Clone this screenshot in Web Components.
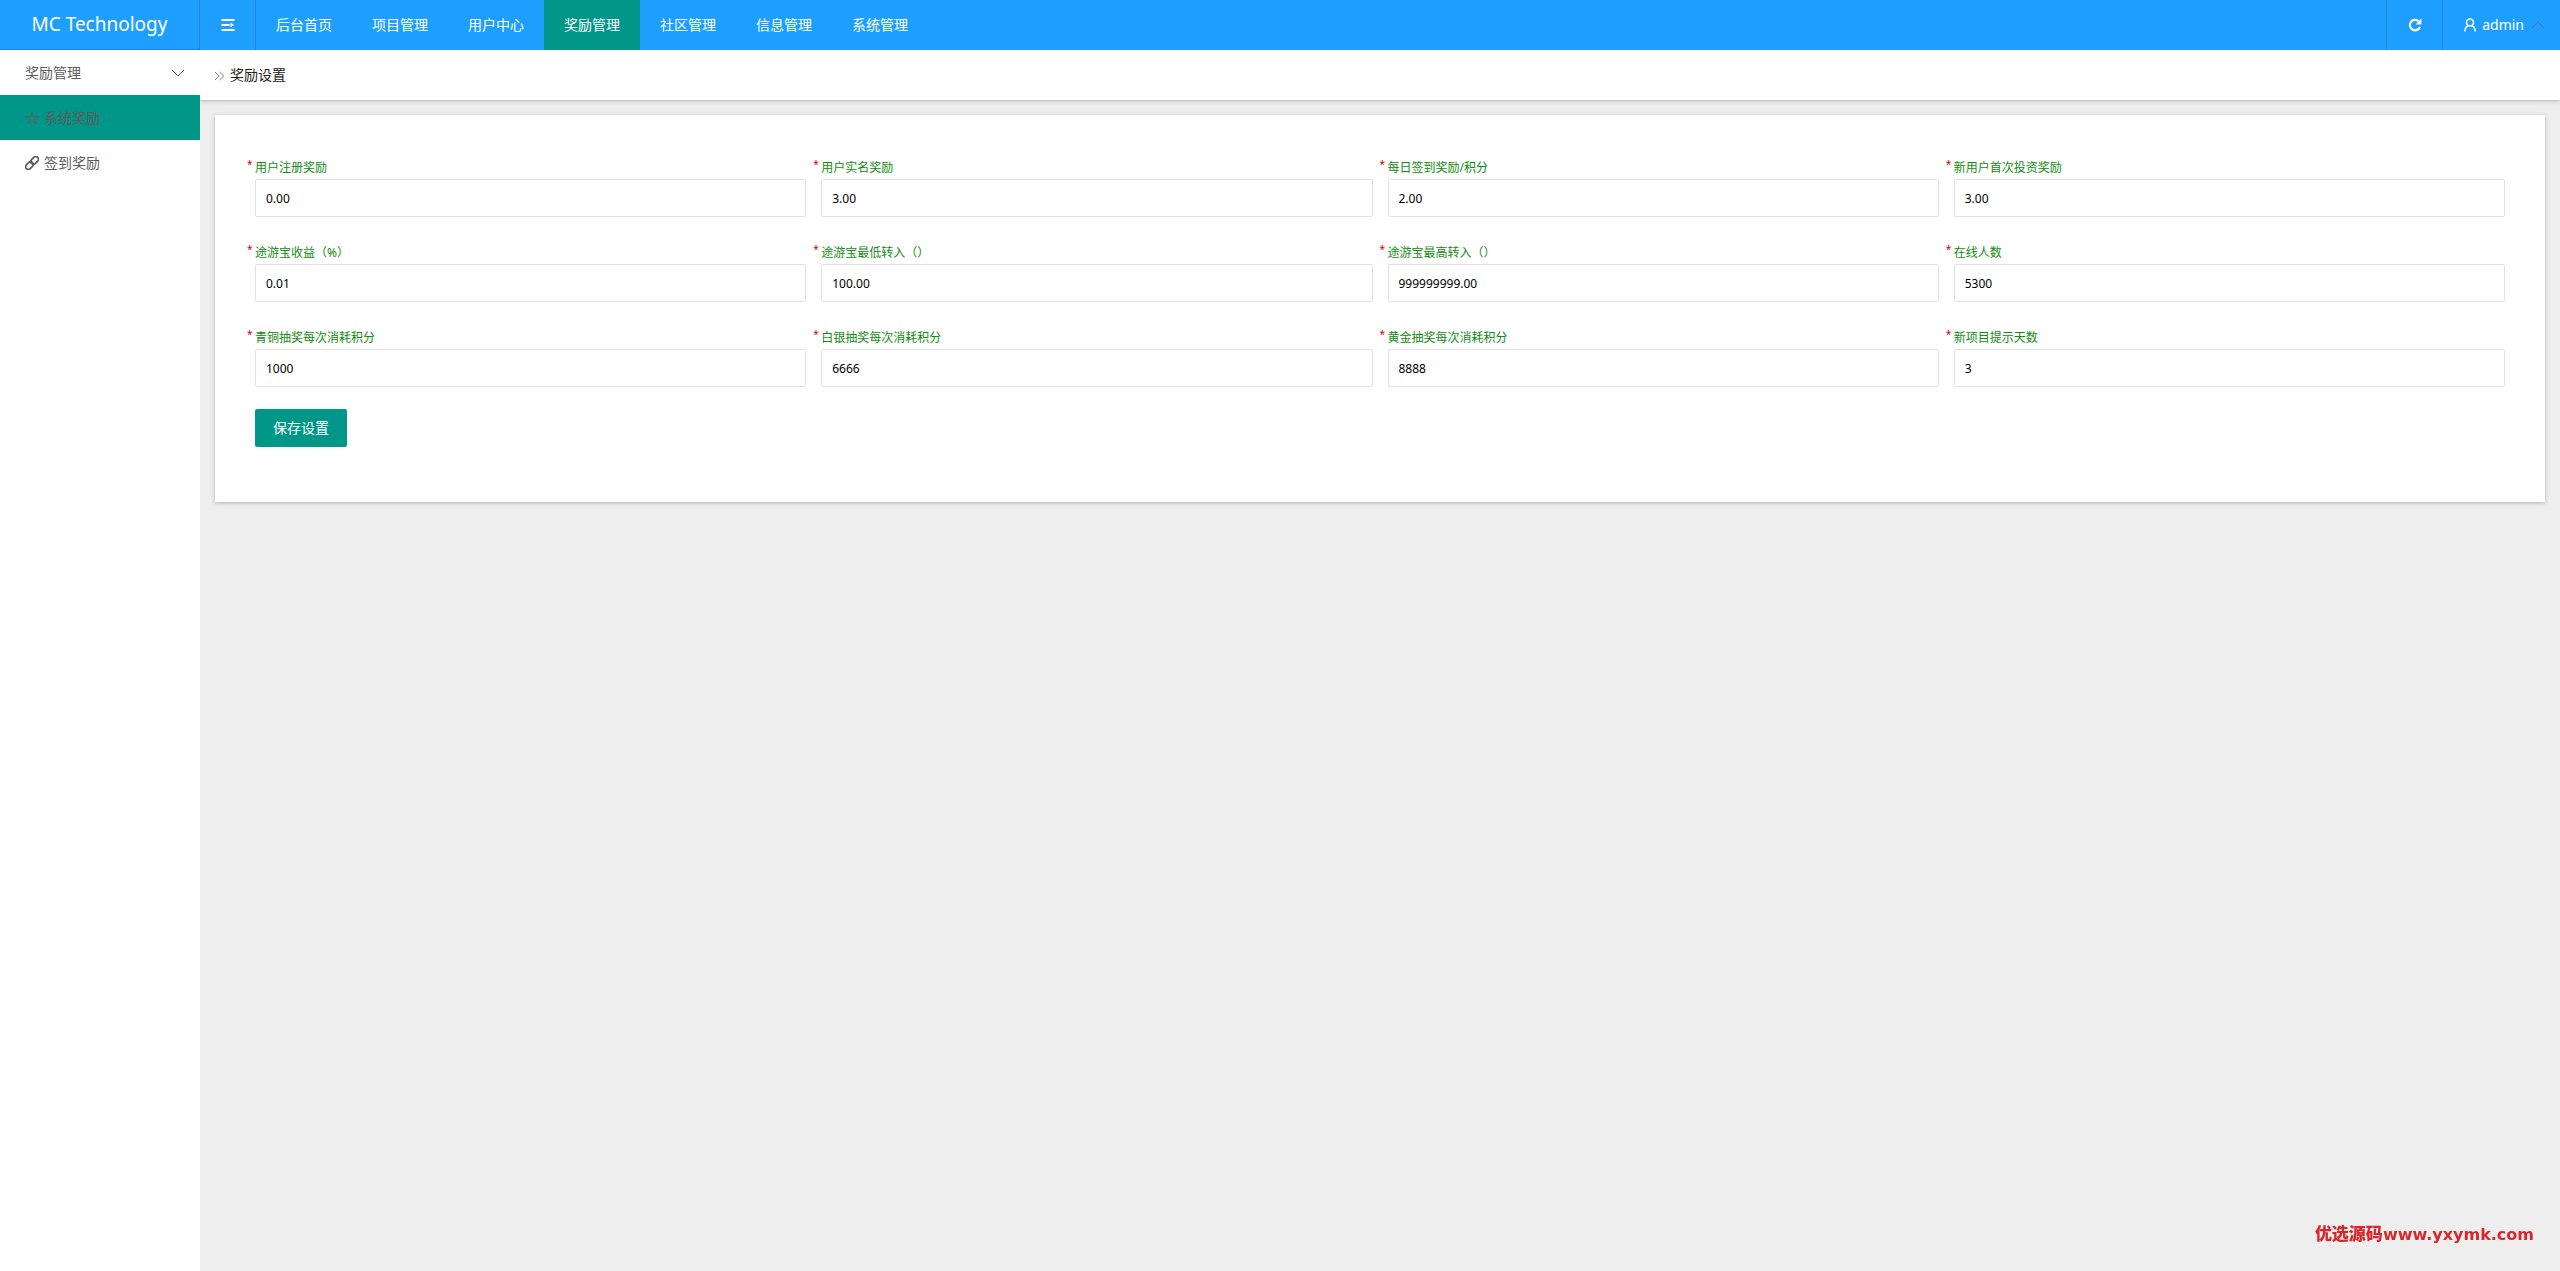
<!DOCTYPE html>
<html lang="zh-CN">
<head>
<meta charset="utf-8">
<meta name="viewport" content="width=device-width, initial-scale=1">
<title>奖励设置</title>
<style>
  body {
    margin: 0;
    background: #eeeeee;
    color: #333;
    font: 14px/24px "Noto Sans", "Noto Sans CJK SC", sans-serif;
  }
</style>
</head>
<body>

<admin-layout>
  <admin-header slot="header" brand="MC Technology" user="admin">
    <nav-item>后台首页</nav-item>
    <nav-item>项目管理</nav-item>
    <nav-item>用户中心</nav-item>
    <nav-item active>奖励管理</nav-item>
    <nav-item>社区管理</nav-item>
    <nav-item>信息管理</nav-item>
    <nav-item>系统管理</nav-item>
  </admin-header>

  <side-menu slot="side" heading="奖励管理">
    <side-item icon="star" active>系统奖励</side-item>
    <side-item icon="link">签到奖励</side-item>
  </side-menu>

  <page-title>奖励设置</page-title>

  <settings-card>
    <form-field label="用户注册奖励" value="0.00"></form-field>
    <form-field label="用户实名奖励" value="3.00"></form-field>
    <form-field label="每日签到奖励/积分" value="2.00"></form-field>
    <form-field label="新用户首次投资奖励" value="3.00"></form-field>
    <form-field label="途游宝收益（%）" value="0.01"></form-field>
    <form-field label="途游宝最低转入（）" value="100.00"></form-field>
    <form-field label="途游宝最高转入（）" value="999999999.00"></form-field>
    <form-field label="在线人数" value="5300"></form-field>
    <form-field label="青铜抽奖每次消耗积分" value="1000"></form-field>
    <form-field label="白银抽奖每次消耗积分" value="6666"></form-field>
    <form-field label="黄金抽奖每次消耗积分" value="8888"></form-field>
    <form-field label="新项目提示天数" value="3"></form-field>
    <save-button slot="actions">保存设置</save-button>
  </settings-card>

  <site-mark slot="mark"><b>优选源码</b>www.yxymk.com</site-mark>
</admin-layout>

<script>
const ICONS = {
  menu: `<path d="M.5 2h13M.5 7h8M.5 12h13" stroke-width="2"/><path d="M9.5 4.4 13 7 9.5 9.6z" fill="currentColor" stroke="none"/>`,
  refresh: `<path d="M12 8.8A5.2 5.2 0 1 1 10.6 3.2" stroke-width="2.2"/><path d="M13.4.6v5.8H7.6z" fill="currentColor" stroke="none"/>`,
  user: `<circle cx="7" cy="4.6" r="3.5" stroke-width="1.5"/><path d="M1.8 13.4c0-3 1.2-4.8 3.4-5.7M12.2 13.4c0-3-1.2-4.8-3.4-5.7" stroke-width="1.5"/>`,
  up: `<path d="M1 10 7 4l6 6"/>`,
  down: `<path d="m1 4 6 6 6-6"/>`,
  more: `<path d="m2 4 4.2 4L2 12M6.5 4l4.2 4-4.2 4"/>`,
  star: `<path d="m7 1.2 1.5 4.3h4.6L9.4 8.2l1.4 4.5L7 10l-3.8 2.7 1.4-4.5L.9 5.5h4.6z"/>`,
  link: `<g transform="rotate(-45 7 7)" stroke-width="1.7"><rect x="-1" y="4.3" width="8.6" height="5.4" rx="2.7"/><rect x="6.4" y="4.3" width="8.6" height="5.4" rx="2.7"/></g>`
};

function icon(name) {
  return `<svg class="icon-${name}" width="14" height="14" viewBox="0 0 14 14"
    fill="none" stroke="currentColor" aria-hidden="true">${ICONS[name]}</svg>`;
}

class AdminLayout extends HTMLElement {
  connectedCallback() {
    this.attachShadow({ mode: "open" }).innerHTML = /* html */`
      <style>
        :host {
          display: flex;
          flex-direction: column;
          min-height: 100vh;
        }
        .body { display: flex; flex: 1; }
        aside { flex: 0 0 200px; background: #fff; }
        main { flex: 1; min-width: 0; }
      </style>
      <slot name="header"></slot>
      <div class="body">
        <aside><slot name="side"></slot></aside>
        <main><slot></slot></main>
      </div>
      <slot name="mark"></slot>
    `;
  }
}

class AdminHeader extends HTMLElement {
  connectedCallback() {
    this.attachShadow({ mode: "open" }).innerHTML = /* html */`
      <style>
        :host {
          display: block;
          background: #1e9fff;
          color: #fff;
        }
        header { display: flex; height: 50px; }
        .brand {
          box-sizing: border-box;
          width: 200px;
          border-right: 1px solid #1a87d9;
          border-bottom: 1px solid #1a87d9;
          color: inherit;
          font-size: 19px;
          line-height: 48px;
          text-align: center;
          text-decoration: none;
        }
        nav { display: flex; flex: 1; }
        button {
          display: flex;
          align-items: center;
          justify-content: center;
          box-sizing: border-box;
          width: 56px;
          padding: 0;
          border: 0;
          background: none;
          color: inherit;
          font: inherit;
          cursor: pointer;
        }
        .toggle { border-right: 1px solid #1a87d9; }
        .reload, .account { border-left: 1px solid #1a87d9; }
        .account {
          gap: 5px;
          width: auto;
          padding: 0 15px 0 20px;
        }
        .icon-up { margin-left: 2px; color: #3a7ca8; }
      </style>
      <header>
        <a class="brand" href="#">${this.getAttribute("brand")}</a>
        <button class="toggle" type="button" aria-label="菜单">${icon("menu")}</button>
        <nav><slot></slot></nav>
        <button class="reload" type="button" aria-label="刷新">${icon("refresh")}</button>
        <button class="account" type="button">
          ${icon("user")}<span>${this.getAttribute("user")}</span>${icon("up")}
        </button>
      </header>
    `;
  }
}

class NavItem extends HTMLElement {
  connectedCallback() {
    this.attachShadow({ mode: "open" }).innerHTML = /* html */`
      <style>
        :host { display: block; }
        :host([active]) { background: #009688; }
        a {
          display: block;
          padding: 0 20px;
          color: #fff;
          line-height: 50px;
          text-decoration: none;
        }
      </style>
      <a href="#"><slot></slot></a>
    `;
  }
}

class SideMenu extends HTMLElement {
  connectedCallback() {
    this.attachShadow({ mode: "open" }).innerHTML = /* html */`
      <style>
        :host { display: block; color: #5c5c5c; }
        button {
          display: flex;
          align-items: center;
          justify-content: space-between;
          width: 100%;
          height: 45px;
          padding: 0 15px 0 25px;
          border: 0;
          background: none;
          color: inherit;
          font: inherit;
          cursor: pointer;
        }
      </style>
      <button type="button" aria-expanded="true">
        <span>${this.getAttribute("heading")}</span>${icon("down")}
      </button>
      <nav><slot></slot></nav>
    `;
  }
}

class SideItem extends HTMLElement {
  connectedCallback() {
    this.attachShadow({ mode: "open" }).innerHTML = /* html */`
      <style>
        :host { display: block; }
        :host([active]) { background: #009688; }
        a {
          display: flex;
          align-items: center;
          gap: 5px;
          height: 45px;
          padding: 0 25px;
          color: inherit;
          text-decoration: none;
        }
      </style>
      <a href="#">${icon(this.getAttribute("icon"))}<span><slot></slot></span></a>
    `;
  }
}

class PageTitle extends HTMLElement {
  connectedCallback() {
    this.attachShadow({ mode: "open" }).innerHTML = /* html */`
      <style>
        :host {
          display: flex;
          align-items: center;
          gap: 3px;
          height: 50px;
          padding: 0 13px;
          background: #fff;
          box-shadow: 0 1px 4px rgba(0, 0, 0, 0.25);
          clip-path: inset(0 0 -8px 0);
        }
        h1 { margin: 0; font: inherit; color: #222; }
        .icon-more { color: #777; }
      </style>
      ${icon("more")}<h1><slot></slot></h1>
    `;
  }
}

class SettingsCard extends HTMLElement {
  connectedCallback() {
    this.attachShadow({ mode: "open" }).innerHTML = /* html */`
      <style>
        :host {
          display: block;
          margin: 15px;
          padding: 40px 40px 55px;
          background: #fff;
          box-shadow: 0 1px 4px rgba(0, 0, 0, 0.25);
        }
        form {
          display: flex;
          flex-direction: column;
          gap: 22px;
        }
        .grid {
          display: grid;
          grid-template-columns: repeat(4, 1fr);
          gap: 23px 15px;
        }
      </style>
      <form>
        <div class="grid"><slot></slot></div>
        <slot name="actions"></slot>
      </form>
    `;
  }
}

class FormField extends HTMLElement {
  connectedCallback() {
    this.attachShadow({ mode: "open" }).innerHTML = /* html */`
      <style>
        :host { display: block; font-size: 12px; }
        label {
          display: block;
          position: relative;
          padding-top: 2px;
          color: #118c11;
          line-height: 22px;
        }
        /* required mark hangs in the gutter left of the label */
        label::before {
          content: "*";
          position: absolute;
          left: -8px;
          top: -2px;
          color: #c00;
          font-size: 10px;
        }
        input {
          display: block;
          box-sizing: border-box;
          width: 100%;
          height: 38px;
          padding: 0 10px;
          border: 1px solid #e2e2e2;
          border-radius: 2px;
          background: #fff;
          color: #000;
          font: inherit;
        }
      </style>
      <label for="field">${this.getAttribute("label")}</label>
      <input id="field" type="text" required value="${this.getAttribute("value")}">
    `;
  }
}

class SaveButton extends HTMLElement {
  connectedCallback() {
    this.attachShadow({ mode: "open" }).innerHTML = /* html */`
      <style>
        :host { display: block; }
        button {
          display: block;
          height: 38px;
          padding: 0 18px;
          border: 0;
          border-radius: 2px;
          background: #009688;
          color: #fff;
          font: inherit;
          cursor: pointer;
        }
      </style>
      <button type="button"><slot></slot></button>
    `;
  }
}

class SiteMark extends HTMLElement {
  connectedCallback() {
    this.attachShadow({ mode: "open" }).innerHTML = /* html */`
      <style>
        :host {
          position: fixed;
          right: 26px;
          bottom: 24px;
          color: #d8262c;
          font: 700 16px/24px "DejaVu Sans", "Noto Sans CJK SC", sans-serif;
        }
        ::slotted(b) { font-size: 17px; }
      </style>
      <slot></slot>
    `;
  }
}

customElements.define("admin-layout", AdminLayout);
customElements.define("admin-header", AdminHeader);
customElements.define("nav-item", NavItem);
customElements.define("side-menu", SideMenu);
customElements.define("side-item", SideItem);
customElements.define("page-title", PageTitle);
customElements.define("settings-card", SettingsCard);
customElements.define("form-field", FormField);
customElements.define("save-button", SaveButton);
customElements.define("site-mark", SiteMark);
</script>
</body>
</html>
